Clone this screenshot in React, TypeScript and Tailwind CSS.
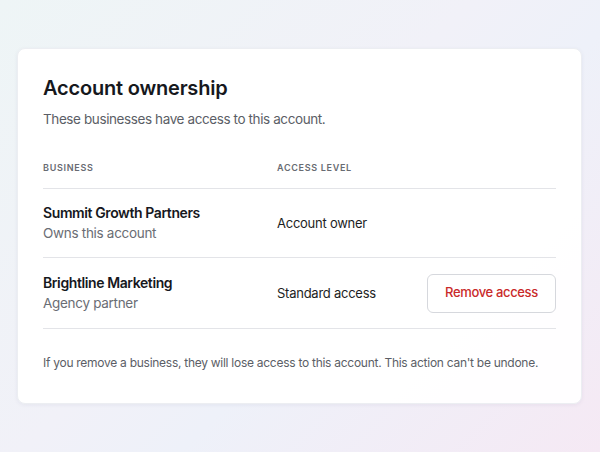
import React from "react";

type Row = {
  name: string;
  note: string;
  level: string;
  removable?: boolean;
};

const rows: Row[] = [
  { name: "Summit Growth Partners", note: "Owns this account", level: "Account owner" },
  { name: "Brightline Marketing", note: "Agency partner", level: "Standard access", removable: true },
];

export default function App() {
  return (
    <div
      className="w-[600px] h-[452px] overflow-hidden bg-[linear-gradient(135deg,#eef5f6_0%,#f1f1f8_45%,#eef1f9_60%,#f5e9f4_100%)] pt-[48px] px-[17px]"
      style={{ fontFamily: "Inter, 'Noto Sans', sans-serif" }}
    >
      <div className="w-[565px] h-[356px] rounded-[8px] bg-white/95 border border-[#eceef2] shadow-[0_1px_4px_rgba(30,40,80,0.06)] px-[25px] pt-[25px]">
        <h1 className="text-[20px] leading-[28px] font-semibold text-[#16181d] tracking-[-0.2px]">
          Account ownership
        </h1>
        <p className="mt-[7px] text-[13.5px] leading-[20px] text-[#5b5e66] tracking-[-0.4px]">
          These businesses have access to this account.
        </p>

        <div className="mt-[32px] grid grid-cols-[234px_1fr_auto] items-center border-b border-[#e3e4e8] pb-[13px]">
          <span className="text-[9px] leading-[14px] font-semibold tracking-[0.7px] text-[#686b72]">BUSINESS</span>
          <span className="text-[9px] leading-[14px] font-semibold tracking-[0.7px] text-[#686b72]">ACCESS LEVEL</span>
          <span />
        </div>

        {rows.map((r, i) => (
          <div
            key={r.name}
            className={`grid grid-cols-[234px_1fr_auto] items-center border-b border-[#e3e4e8] ${i === 0 ? "h-[69px]" : "h-[71px]"}`}
          >
            <div className="flex flex-col">
              <span className="text-[14px] leading-[20px] font-semibold text-[#16181d] tracking-[-0.4px]">{r.name}</span>
              <span className="text-[13.5px] leading-[21px] text-[#6a6d74] tracking-[-0.3px]">{r.note}</span>
            </div>
            <span className="text-[13px] leading-[20px] text-[#1c1e23] tracking-[-0.25px]">{r.level}</span>
            {r.removable ? (
              <button className="w-[129px] h-[39px] rounded-[6px] border border-[#d6d8dd] bg-white text-[13px] font-medium text-[#c92a2a] tracking-[-0.35px]">
                Remove access
              </button>
            ) : (
              <span />
            )}
          </div>
        ))}

        <p className="mt-[25px] text-[12px] leading-[18px] text-[#5b5e66] tracking-[-0.27px]">
          If you remove a business, they will lose access to this account. This action can't be undone.
        </p>
      </div>
    </div>
  );
}
